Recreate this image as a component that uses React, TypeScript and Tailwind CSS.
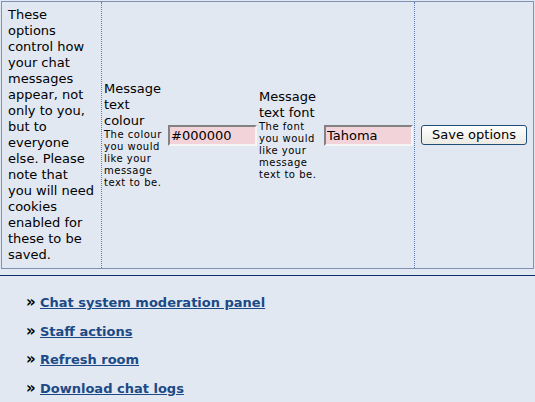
import React from 'react';

const links = [
  'Chat system moderation panel',
  'Staff actions',
  'Refresh room',
  'Download chat logs',
];

function OptionField({ label, hint, value, labelWidth }: { label: string; hint: string; value: string; labelWidth: string }) {
  return (
    <>
      <div className={`${labelWidth} shrink-0`}>
        <div className="text-[13px] leading-[16px]">{label}</div>
        <div className="text-[10px] leading-[12px] tracking-[0.5px]">{hint}</div>
      </div>
      <input
        defaultValue={value}
        className="w-[89px] h-[21px] shrink-0 bg-[#f3d3da] border-2 border-t-[#828282] border-l-[#828282] border-b-[#f5f5f5] border-r-[#f5f5f5] pl-px text-[13px] text-black outline-none font-['DejaVu_Sans',sans-serif]"
      />
    </>
  );
}

export default function App() {
  return (
    <div className="min-h-[402px] bg-[#e2e8f1] pt-px text-black font-['DejaVu_Sans',sans-serif]">
      {/* Options table */}
      <div className="ml-px w-[533px] h-[268px] flex border border-[#7e92b3]">
        <div className="w-[100px] shrink-0 flex items-center px-[6px] border-r border-dotted border-[#5d7cb6] text-[13px] leading-[16px]">
          These options control how your chat messages appear, not only to you, but to everyone else. Please note that you will need cookies enabled for these to be saved.
        </div>

        <div className="w-[313px] shrink-0 flex items-center gap-[2px] pl-[2px] pr-px border-r border-dotted border-[#5d7cb6]">
          <OptionField
            label="Message text colour"
            hint="The colour you would like your message text to be."
            value="#000000"
            labelWidth="w-[62px]"
          />
          <OptionField
            label="Message text font"
            hint="The font you would like your message text to be."
            value="Tahoma"
            labelWidth="w-[63px]"
          />
        </div>

        <div className="flex-1 flex items-center justify-center">
          <button className="w-[106px] h-[20px] rounded-[3px] border border-[#1f4d7a] bg-gradient-to-b from-white to-[#ebeae4] text-[13px] leading-[16px] text-black">
            Save options
          </button>
        </div>
      </div>

      <div className="mt-[6px] h-px bg-[#0f2e67]" />

      {/* Links */}
      <ul className="mt-[18px] pl-[26px] flex flex-col gap-[12.67px]">
        {links.map((l) => (
          <li key={l} className="h-[16px] flex items-baseline text-[13px] leading-[16px] font-bold">
            <span className="w-[14px] text-[15px] leading-[16px] text-black">»</span>
            <a href="#" className="text-[#1b4a86] underline">
              {l}
            </a>
          </li>
        ))}
      </ul>
    </div>
  );
}
